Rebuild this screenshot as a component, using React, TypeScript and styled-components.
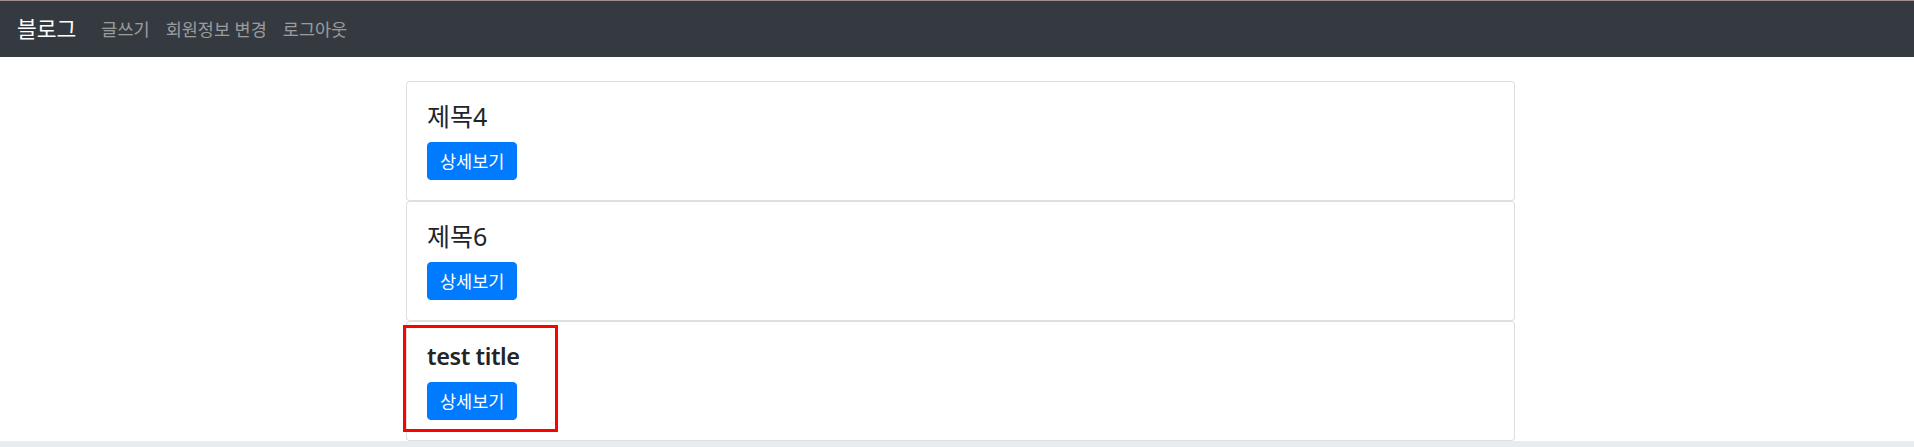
import React from "react";
import styled, { createGlobalStyle } from "styled-components";

const GlobalStyle = createGlobalStyle`
  html, body {
    margin: 0;
    padding: 0;
    background: #fff;
  }
  body {
    font-family: "Noto Sans", "Noto Sans CJK KR", sans-serif;
    font-size: 16px;
    line-height: 1.5;
    color: #212529;
    overflow: hidden;
  }
`;

const Page = styled.div`
  position: relative;
  height: 447px;
  border-top: 1px solid #a08d8a;
  box-sizing: border-box;
  display: flex;
  flex-direction: column;
`;

const Navbar = styled.nav`
  display: flex;
  align-items: center;
  height: 56px;
  padding: 0 16px 0 17px;
  background: #343a40;
  flex-shrink: 0;
`;

const Brand = styled.a`
  font-size: 21.5px;
  line-height: 30px;
  color: #fff;
  margin-right: 17px;
  text-decoration: none;
`;

const NavLink = styled.a`
  font-size: 17.5px;
  line-height: 24px;
  padding: 8px;
  color: rgba(255, 255, 255, 0.5);
  text-decoration: none;
`;

const Container = styled.main`
  width: 1109px;
  margin: 24px 0 0 calc(50% - 551px);
  flex: 1;
`;

const Card = styled.div`
  position: relative;
  border: 1px solid rgba(0, 0, 0, 0.125);
  border-radius: 4px;
  padding: 20px;
  box-sizing: border-box;
  background: #fff;
`;

const Title = styled.h4<{ $latin?: boolean }>`
  margin: 0 0 12px;
  font-size: ${(p) => (p.$latin ? "23.5px" : "25px")};
  line-height: 28px;
  font-weight: ${(p) => (p.$latin ? 600 : 400)};
  letter-spacing: ${(p) => (p.$latin ? "-0.4px" : "0")};
  color: #212529;
`;

const Button = styled.a`
  display: inline-block;
  padding: 6px 12px;
  font-size: 17.5px;
  line-height: 24px;
  color: #fff;
  background: #007bff;
  border: 1px solid #007bff;
  border-radius: 4px;
  text-decoration: none;
`;

const Highlight = styled.div`
  position: absolute;
  left: -4px;
  top: 3px;
  width: 155px;
  height: 107px;
  border: 3px solid #ff0000;
  box-sizing: border-box;
  pointer-events: none;
`;

const BottomBar = styled.div`
  height: 6px;
  background: #e9ecef;
  flex-shrink: 0;
`;

const posts = [
  { title: "제목4" },
  { title: "제목6" },
  { title: "test title", latin: true, marked: true },
];

export default function App() {
  return (
    <>
      <GlobalStyle />
      <Page>
        <Navbar>
          <Brand href="#">블로그</Brand>
          <NavLink href="#">글쓰기</NavLink>
          <NavLink href="#">회원정보 변경</NavLink>
          <NavLink href="#">로그아웃</NavLink>
        </Navbar>
        <Container>
          {posts.map((p) => (
            <Card key={p.title}>
              <Title $latin={p.latin}>{p.title}</Title>
              <Button href="#">상세보기</Button>
              {p.marked && <Highlight />}
            </Card>
          ))}
        </Container>
        <BottomBar />
      </Page>
    </>
  );
}
